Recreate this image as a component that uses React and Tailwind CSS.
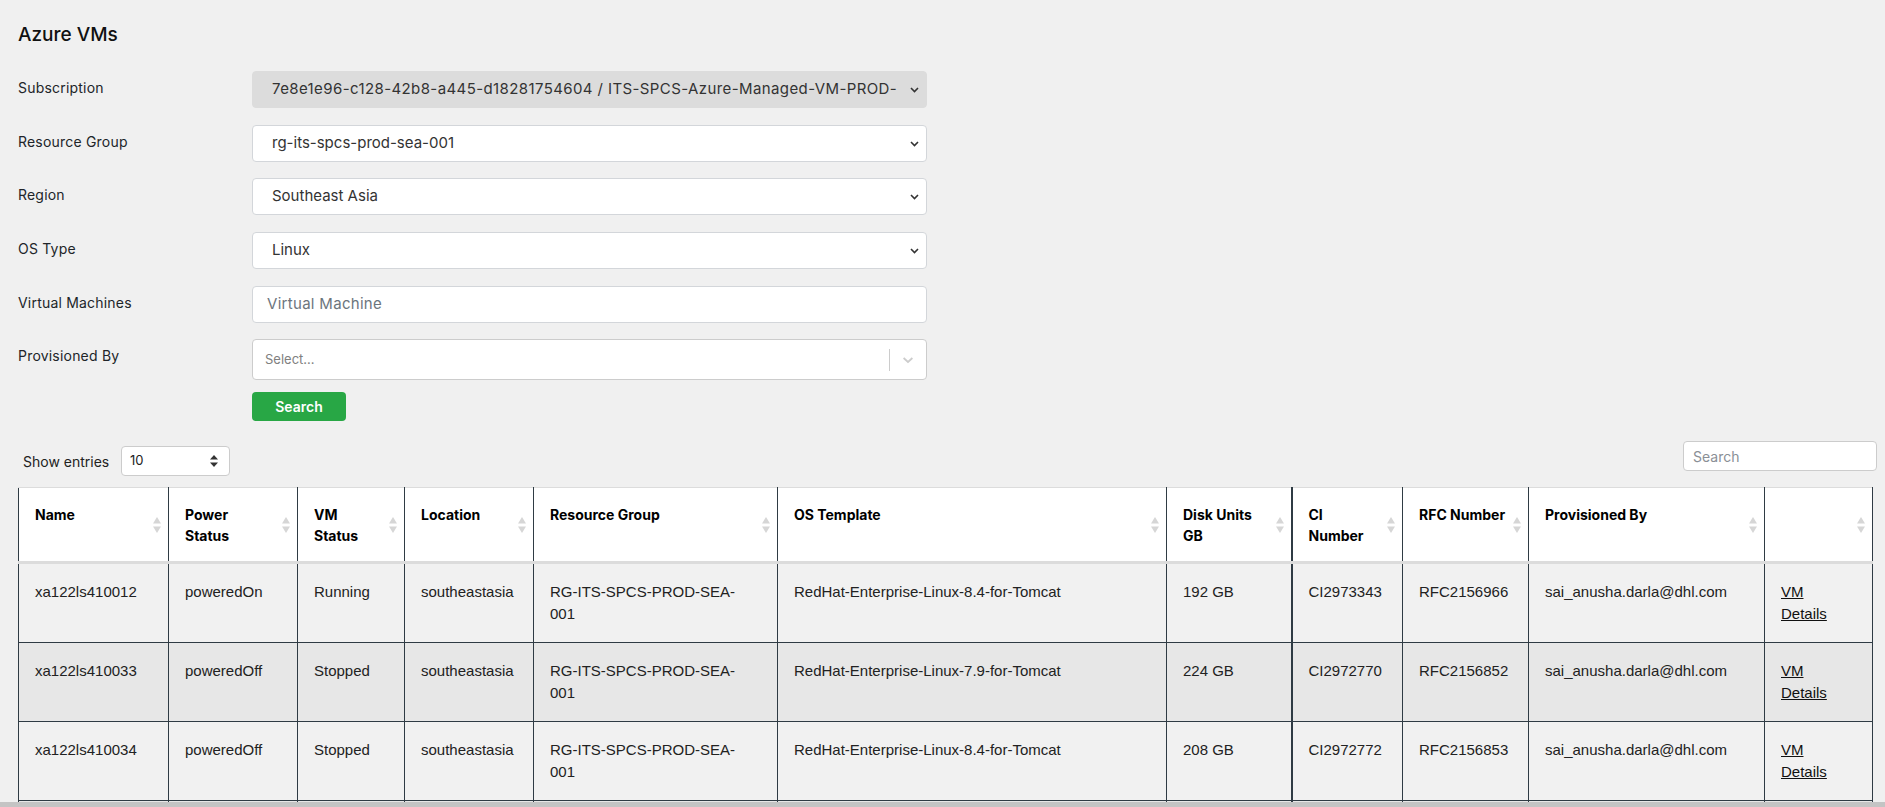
import React from 'react';

const sans = { fontFamily: 'Inter, "Noto Sans", sans-serif' };

const cols = [
  { w: 150, h: ['Name'] },
  { w: 129, h: ['Power', 'Status'] },
  { w: 107, h: ['VM', 'Status'] },
  { w: 129, h: ['Location'] },
  { w: 244, h: ['Resource Group'] },
  { w: 389, h: ['OS Template'] },
  { w: 125, h: ['Disk Units', 'GB'] },
  { w: 111, h: ['CI', 'Number'] },
  { w: 126, h: ['RFC Number'] },
  { w: 236, h: ['Provisioned By'] },
  { w: 108, h: [''] }
];

const rows = [
  ['xa122ls410012', 'poweredOn', 'Running', 'RedHat-Enterprise-Linux-8.4-for-Tomcat', '192 GB', 'CI2973343', 'RFC2156966'],
  ['xa122ls410033', 'poweredOff', 'Stopped', 'RedHat-Enterprise-Linux-7.9-for-Tomcat', '224 GB', 'CI2972770', 'RFC2156852'],
  ['xa122ls410034', 'poweredOff', 'Stopped', 'RedHat-Enterprise-Linux-8.4-for-Tomcat', '208 GB', 'CI2972772', 'RFC2156853']
];

const Chevron = () => (
  <svg width="9" height="6" viewBox="0 0 9 6" className="shrink-0">
    <polyline points="1,1 4.5,4.5 8,1" fill="none" stroke="#333" strokeWidth="1.6" />
  </svg>
);

const SortIcon = () => (
  <svg width="8" height="16" viewBox="0 0 8 16" className="absolute right-[7px] top-1/2 -translate-y-1/2">
    <polygon points="4,0 8,6.5 0,6.5" fill="#d6d6d6" />
    <polygon points="0,9.5 8,9.5 4,16" fill="#d6d6d6" />
  </svg>
);

const NativeSelect = ({ value, disabled }) => (
  <div
    className={`w-[675px] h-[37px] rounded-[4px] border flex items-center justify-between pl-[19px] pr-[7px] text-[15px] text-[#333] ${
      disabled ? 'bg-[#dcdcdc] border-[#dcdcdc] tracking-[0.4px]' : 'bg-white border-[#d3d6da]'
    }`}
  >
    <span className="truncate">{value}</span>
    <Chevron />
  </div>
);

const FormRow = ({ label, children, mb }) => (
  <div className={`flex items-start ${mb}`}>
    <div className="w-[234px] pt-[7px] leading-[20px] text-[14px] text-[#212529] tracking-[0.2px]">{label}</div>
    {children}
  </div>
);

const cellsFor = (r) => [
  r[0],
  r[1],
  r[2],
  'southeastasia',
  ['RG-ITS-SPCS-PROD-SEA-', '001'],
  r[3],
  r[4],
  r[5],
  r[6],
  'sai_anusha.darla@dhl.com',
  'link'
];

export default function App() {
  return (
    <div className="h-[807px] overflow-hidden flex flex-col bg-[#f0f0f0]" style={sans}>
      <div className="flex-1 overflow-hidden pl-[18px] pr-[8px] pt-[21px]">
        <h1 className="text-[19px] leading-[28px] font-medium text-[#111] mb-[22px]">Azure VMs</h1>

        <FormRow label="Subscription" mb="mb-[17px]">
          <NativeSelect disabled value="7e8e1e96-c128-42b8-a445-d18281754604 / ITS-SPCS-Azure-Managed-VM-PROD-" />
        </FormRow>
        <FormRow label="Resource Group" mb="mb-[16px]">
          <NativeSelect value="rg-its-spcs-prod-sea-001" />
        </FormRow>
        <FormRow label="Region" mb="mb-[17px]">
          <NativeSelect value="Southeast Asia" />
        </FormRow>
        <FormRow label="OS Type" mb="mb-[17px]">
          <NativeSelect value="Linux" />
        </FormRow>
        <FormRow label="Virtual Machines" mb="mb-[16px]">
          <div className="w-[675px] h-[37px] rounded-[4px] border border-[#d3d6da] bg-white flex items-center pl-[14px] text-[15px] tracking-[0.3px] text-[#6c757d]">
            Virtual Machine
          </div>
        </FormRow>
        <FormRow label="Provisioned By" mb="mb-[12px]">
          <div className="w-[675px] h-[41px] rounded-[4px] border border-[#cccccc] bg-white flex items-center">
            <span className="flex-1 pl-[12px] text-[13px] text-[#808080]">Select...</span>
            <span className="w-px h-[22px] bg-[#cccccc]" />
            <span className="w-[36px] flex justify-center">
              <svg width="16" height="16" viewBox="0 0 20 20">
                <path d="M4.5 7.5 L10 12.5 L15.5 7.5" fill="none" stroke="#cccccc" strokeWidth="2.2" />
              </svg>
            </span>
          </div>
        </FormRow>
        <div className="pl-[234px] mb-[20px]">
          <button className="w-[94px] h-[29px] rounded-[4px] bg-[#28a745] text-white text-[14px] font-semibold">
            Search
          </button>
        </div>

        <div className="flex items-start justify-between mb-[11px]">
          <div className="flex items-center pl-[5px] mt-[5px]">
            <span className="w-[98px] text-[14px] text-[#222]">Show entries</span>
            <div className="w-[109px] h-[30px] rounded-[4px] border border-[#cccccc] bg-white flex items-center justify-between pl-[8px] pr-[11px] text-[13px] text-[#222]">
              <span>10</span>
              <svg width="8" height="12" viewBox="0 0 8 12">
                <polygon points="4,0 8,4.5 0,4.5" fill="#333" />
                <polygon points="0,7.5 8,7.5 4,12" fill="#333" />
              </svg>
            </div>
          </div>
          <div className="w-[194px] h-[30px] rounded-[4px] border border-[#cccccc] bg-white flex items-center pl-[9px] text-[14px] text-[#8a8f96]">
            Search
          </div>
        </div>

        <table className="table-fixed border-collapse w-[1854px]">
          <colgroup>
            {cols.map((c, i) => (
              <col key={i} style={{ width: c.w }} />
            ))}
          </colgroup>
          <thead>
            <tr className="bg-white">
              {cols.map((c, i) => (
                <th
                  key={i}
                  className={`relative text-left align-top font-bold text-[14px] leading-[21px] text-black pl-[16px] pr-[20px] pt-[16px] pb-[13px] h-[75px] border-t border-t-[#dcdcdc] border-b-[3px] border-b-[#dcdcdc] border-x border-x-[#2f3b44] ${
                    i === 7 ? 'border-l-2' : ''
                  }`}
                >
                  {c.h.map((t, j) => (
                    <div key={j} className="whitespace-nowrap">{t}</div>
                  ))}
                  <SortIcon />
                </th>
              ))}
            </tr>
          </thead>
          <tbody style={{ fontFamily: '"Liberation Sans", Arial, sans-serif' }}>
            {rows.map((r, i) => (
              <tr key={i} className={i % 2 === 1 ? 'bg-[#e7e7e7]' : 'bg-[#f1f1f1]'}>
                {cellsFor(r).map((v, j) => (
                  <td
                    key={j}
                    className={`align-top text-[15px] leading-[22px] text-[#222] pl-[16px] pr-[8px] pt-[17px] pb-[17px] h-[78px] border border-[#2f3b44] ${
                      j === 7 ? 'border-l-2' : ''
                    }`}
                  >
                    {v === 'link' ? (
                      <a href="#" className="underline text-[#111]">
                        VM
                        <br />
                        Details
                      </a>
                    ) : Array.isArray(v) ? (
                      v.map((t, k) => <div key={k}>{t}</div>)
                    ) : (
                      <span className="whitespace-nowrap">{v}</span>
                    )}
                  </td>
                ))}
              </tr>
            ))}
            {/* next row continues below the fold */}
            <tr className="bg-[#e7e7e7]">
              {cols.map((c, j) => (
                <td
                  key={j}
                  className={`h-[78px] border border-[#2f3b44] ${j === 7 ? 'border-l-2' : ''}`}
                />
              ))}
            </tr>
          </tbody>
        </table>
      </div>
      <div className="h-[5px] bg-[#c4c4c4] shrink-0" />
    </div>
  );
}
